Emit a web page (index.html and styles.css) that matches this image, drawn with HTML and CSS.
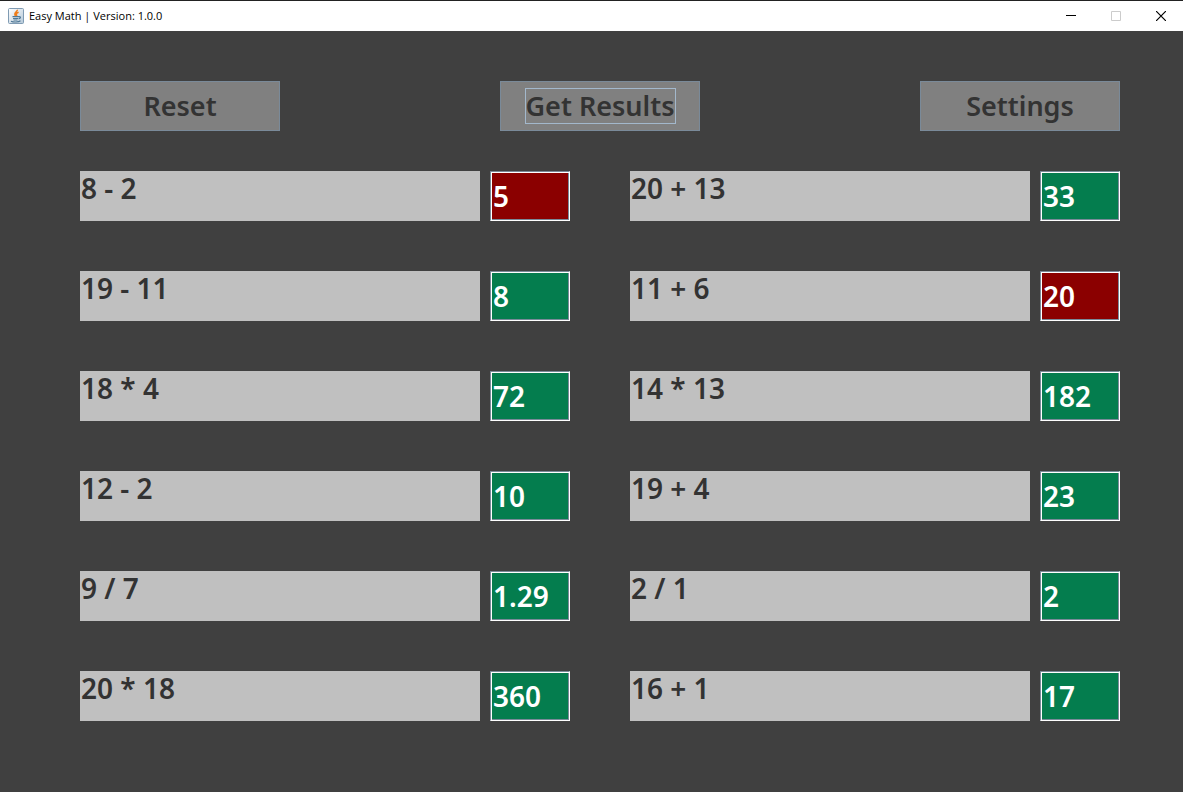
FILE: index.html
```html
<!DOCTYPE html>
<html lang="en">
<head>
<meta charset="utf-8">
<title>Easy Math | Version: 1.0.0</title>
<link rel="stylesheet" href="styles.css">
</head>
<body>
<header class="titlebar">
  <svg class="app-icon" viewBox="0 0 16 16" width="16" height="16" aria-hidden="true">
    <defs><linearGradient id="tile" x1="0" y1="0" x2="1" y2="1"><stop offset="0" stop-color="#fff"/><stop offset="1" stop-color="#b4c8d8"/></linearGradient></defs>
    <rect x=".5" y=".5" width="15" height="15" rx="1" fill="url(#tile)" stroke="#7f9bb3"/>
    <path d="M9.300 1.800C9.800 3.800 5 4.400 7.600 8M10.600 4.200C8.200 5 7.700 6 9 8" fill="none" stroke="#f07c18" stroke-width="1.600"/>
    <path d="M4.500 8.700h6M5 10.500h5M5.500 12h4M10.500 8.700c2.700-.6 2.500 1.700 0 2.200M3 13.200c2.500 1.200 7.500 1 9.500-.4" fill="none" stroke="#4f7896" stroke-width="1.200"/>
  </svg>
  <h1 class="title">Easy Math | Version: 1.0.0</h1>
  <div class="window-controls">
    <button class="window-button" type="button" aria-label="Minimize"><svg width="10" height="10" viewBox="0 0 10 10"><path d="M0 4.500h10" stroke="#000"/></svg></button>
    <button class="window-button" type="button" aria-label="Maximize" disabled><svg width="10" height="10" viewBox="0 0 10 10"><path d="M.5.5h9v9h-9z" fill="none" stroke="#ccc"/></svg></button>
    <button class="window-button" type="button" aria-label="Close"><svg width="10" height="10" viewBox="0 0 10 10"><path d="M0 0l10 10M10 0L0 10" stroke="#000" stroke-width="1.200"/></svg></button>
  </div>
</header>
<main class="content">
  <nav class="toolbar">
    <button class="action" type="button"><span class="action-text">Reset</span></button>
    <button class="action" type="button"><span class="action-text focused">Get Results</span></button>
    <button class="action" type="button"><span class="action-text">Settings</span></button>
  </nav>
  <form class="problems">
    <div class="problem"><label class="question" for="a1">8 - 2</label><input class="answer wrong" id="a1" value="5"></div>
    <div class="problem"><label class="question" for="b1">20 + 13</label><input class="answer" id="b1" value="33"></div>
    <div class="problem"><label class="question" for="a2">19 - 11</label><input class="answer" id="a2" value="8"></div>
    <div class="problem"><label class="question" for="b2">11 + 6</label><input class="answer wrong" id="b2" value="20"></div>
    <div class="problem"><label class="question" for="a3">18 * 4</label><input class="answer" id="a3" value="72"></div>
    <div class="problem"><label class="question" for="b3">14 * 13</label><input class="answer" id="b3" value="182"></div>
    <div class="problem"><label class="question" for="a4">12 - 2</label><input class="answer" id="a4" value="10"></div>
    <div class="problem"><label class="question" for="b4">19 + 4</label><input class="answer" id="b4" value="23"></div>
    <div class="problem"><label class="question" for="a5">9 / 7</label><input class="answer" id="a5" value="1.29"></div>
    <div class="problem"><label class="question" for="b5">2 / 1</label><input class="answer" id="b5" value="2"></div>
    <div class="problem"><label class="question" for="a6">20 * 18</label><input class="answer" id="a6" value="360"></div>
    <div class="problem"><label class="question" for="b6">16 + 1</label><input class="answer" id="b6" value="17"></div>
  </form>
</main>
</body>
</html>
```
FILE: styles.css
```css
* { box-sizing: border-box; }
body {
  margin: 0;
  min-height: 100vh;
  background: #404040;
  color: #333;
  font-family: "Trebuchet MS", "Noto Sans", "Open Sans", sans-serif;
}
.titlebar {
  display: flex;
  align-items: center;
  height: 31px;
  padding-left: 8px;
  border-top: 1px solid #222;
  background: #fff;
}
.app-icon { display: block; }
.title {
  margin: 0 0 0 5px;
  color: #000;
  font: 400 11px/16px "Segoe UI", "Open Sans", sans-serif;
}
.window-controls {
  display: flex;
  align-self: stretch;
  margin-left: auto;
}
.window-button {
  display: grid;
  place-items: center;
  width: 45px;
  padding: 0;
  border: 0;
  background: none;
}
.content { padding: 50px 63px 50px 80px; }
.toolbar {
  display: flex;
  justify-content: space-between;
  margin-bottom: 40px;
}
.action {
  width: 200px;
  height: 50px;
  padding: 0;
  border: 1px solid #7a8a99;
  background: #808080;
  color: #333;
  font: 600 27px/34px "Trebuchet MS", "Noto Sans", "Open Sans", sans-serif;
}
.action-text {
  display: inline-block;
  border: 1px solid transparent;
}
.focused { border-color: #a3b8cc; }
.problems {
  display: grid;
  grid-template-columns: 1fr 1fr;
  gap: 50px 60px;
}
.problem {
  display: grid;
  grid-template-columns: 1fr 80px;
  gap: 10px;
}
.question {
  min-height: 50px;
  padding-left: 1px;
  background: #c0c0c0;
  font-size: 28px;
  font-weight: 600;
  line-height: 34px;
}
.answer {
  width: 100%;
  height: 50px;
  padding: 0 2px;
  border: 1px solid #fff;
  border-top-color: #7a8a99;
  border-left-color: #7a8a99;
  border-radius: 0;
  outline: 0;
  background: #047d4e;
  box-shadow: inset 1px 1px #fff, inset -1px -1px #7a8a99;
  color: #fff;
  font: 600 28px/34px "Trebuchet MS", "Noto Sans", "Open Sans", sans-serif;
}
.wrong { background: #8b0000; }
```
